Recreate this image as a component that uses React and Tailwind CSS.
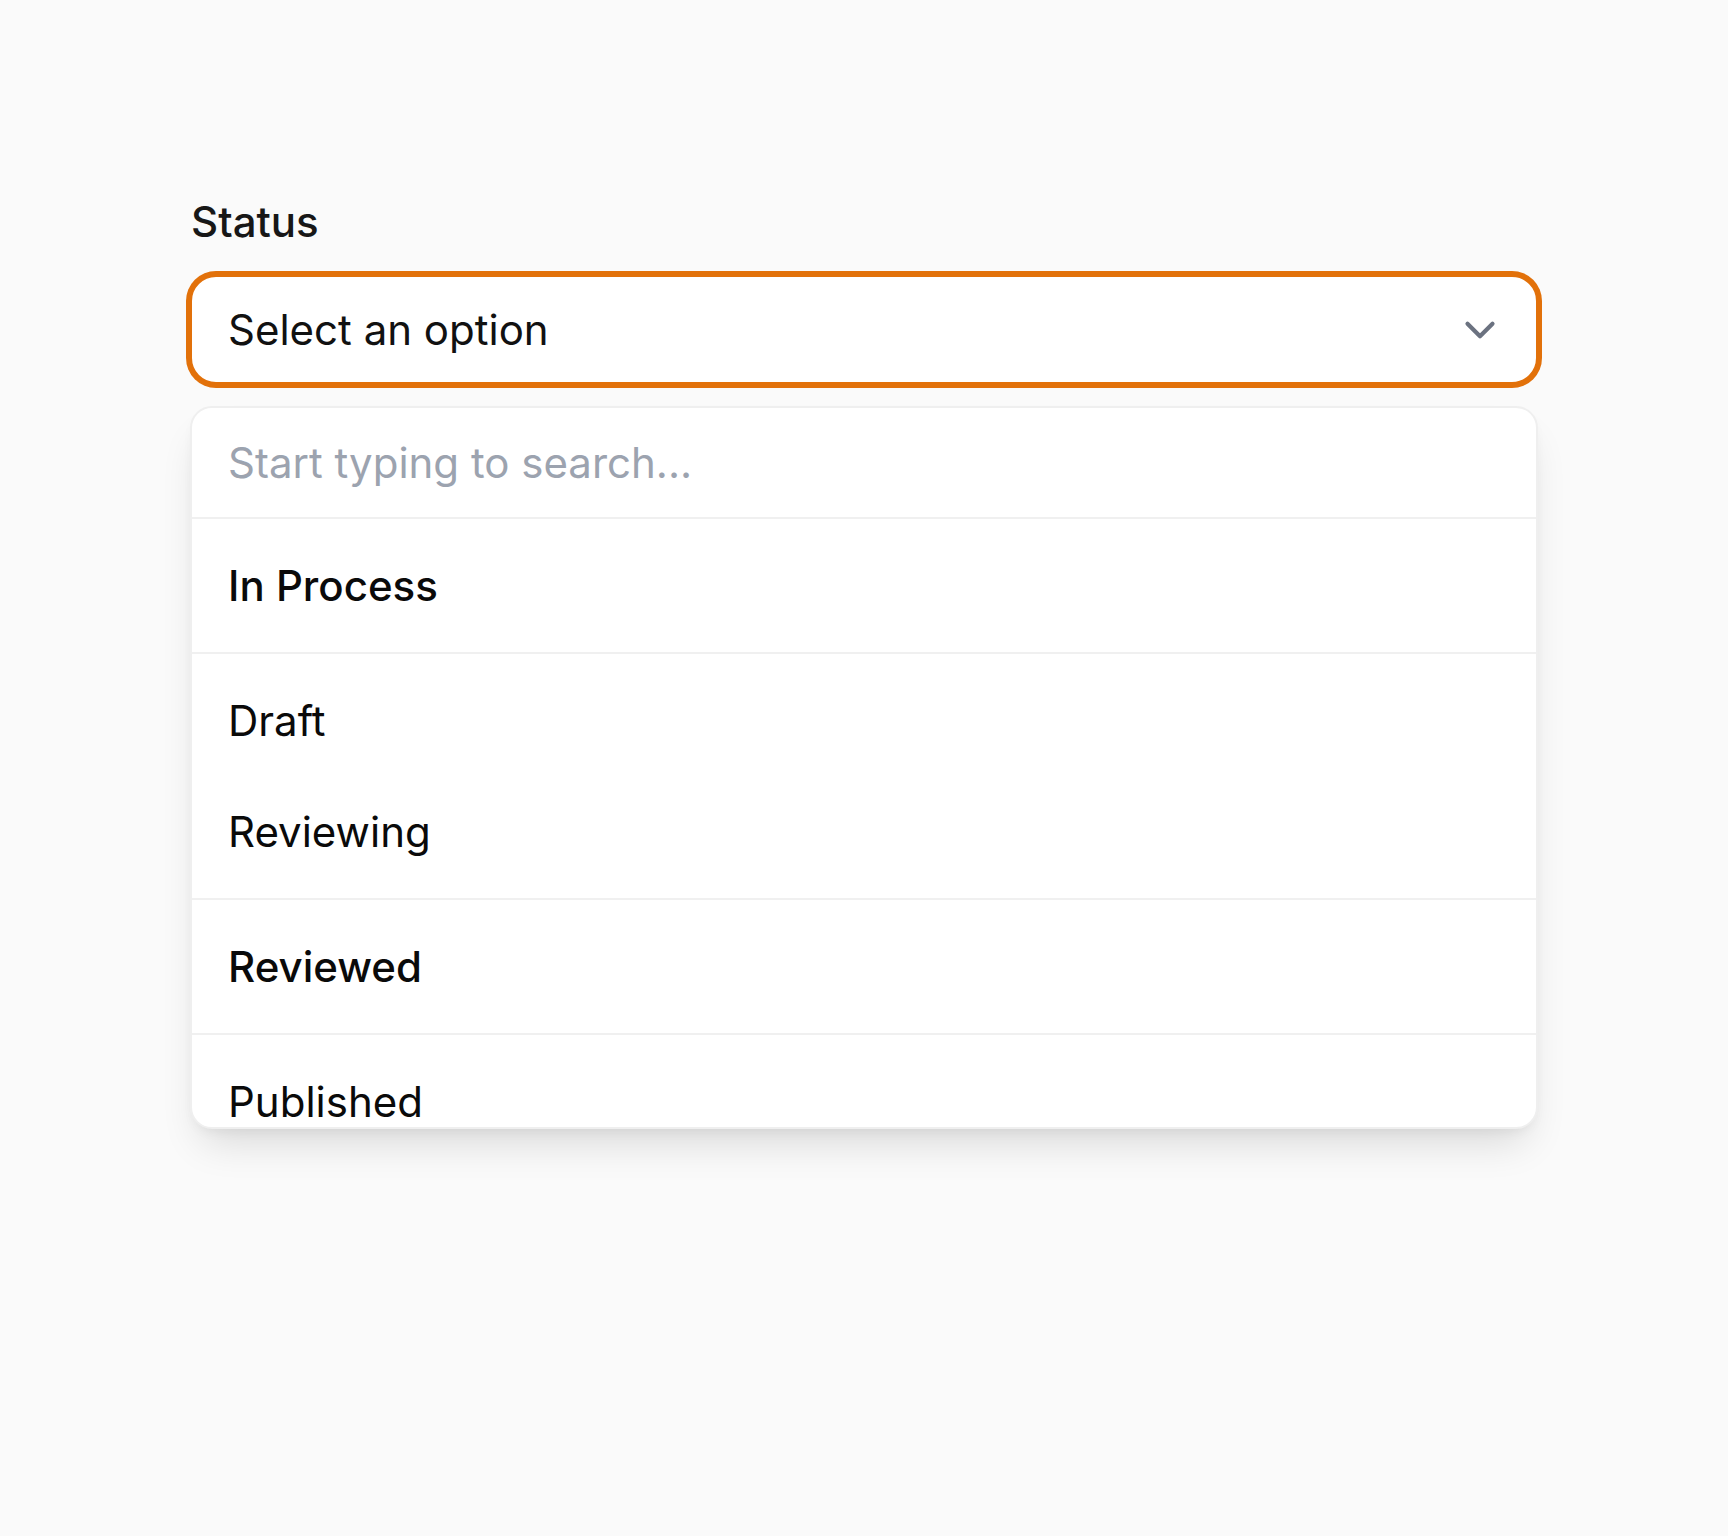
import React, { useState } from "react";
import { ChevronDown } from "lucide-react";

// Grouped status options, dividers sit between the groups
const groups = [
  [{ label: "In Process", strong: true }],
  [{ label: "Draft" }, { label: "Reviewing" }],
  [{ label: "Reviewed", strong: true }],
  [{ label: "Published" }, { label: "Archived" }],
];

export default function App() {
  const [query, setQuery] = useState("");

  return (
    <div className="min-h-screen bg-[#fafafa] font-['Inter','Noto_Sans',sans-serif]">
      <div className="mx-auto w-[1348px] pt-[198px]">
        {/* Label */}
        <label className="block pl-[1px] text-[42px] leading-[48px] font-medium text-[#171717] mb-[29px]">
          Status
        </label>

        {/* Select trigger */}
        <button
          type="button"
          className="flex w-full h-[109px] items-center justify-between rounded-[26px] border-2 border-[#e2710a] ring-4 ring-[#e2710a] bg-white pl-[36px] pr-[31px] text-left"
        >
          <span className="text-[42px] text-[#111111]">Select an option</span>
          <ChevronDown size={50} strokeWidth={2} className="text-[#6b7280]" />
        </button>

        {/* Dropdown panel */}
        <div className="mt-[22px] h-[723px] overflow-hidden rounded-[22px] border-2 border-[#efefef] bg-white shadow-[0_24px_40px_-12px_rgba(0,0,0,0.14),0_6px_14px_-6px_rgba(0,0,0,0.08)]">
          <div className="h-[109px] flex items-center px-[36px]">
            <input
              type="text"
              value={query}
              onChange={(e) => setQuery(e.target.value)}
              placeholder="Start typing to search..."
              className="w-full bg-transparent text-[42px] text-[#111111] placeholder:text-[#9ca3af] outline-none"
            />
          </div>
          {groups.map((group, i) => (
            <div key={i} className="border-t-2 border-[#f0f0f0] py-[11px]">
              {group.map((opt) => (
                <div
                  key={opt.label}
                  className={`h-[111px] flex items-center px-[36px] text-[42px] text-[#0a0a0a] ${
                    opt.strong ? "font-medium" : "font-normal"
                  }`}
                >
                  {opt.label}
                </div>
              ))}
            </div>
          ))}
        </div>
      </div>
    </div>
  );
}
